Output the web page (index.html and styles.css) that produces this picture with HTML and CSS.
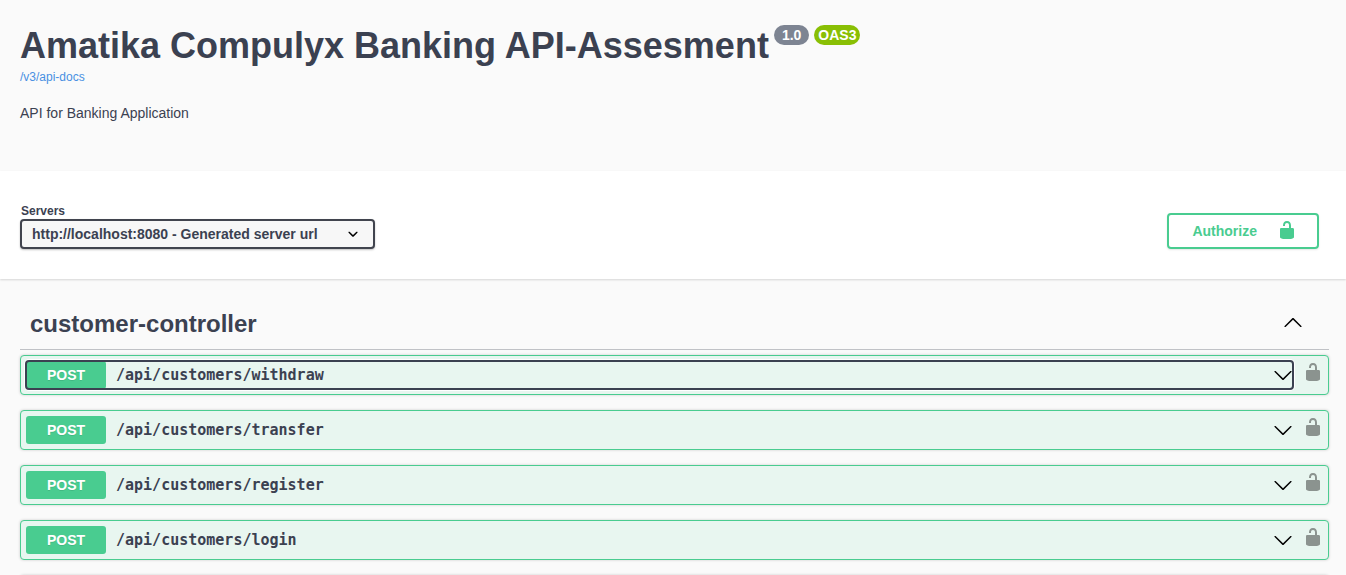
FILE: index.html
```html
<!DOCTYPE html>
<html lang="en">
<head>
<meta charset="utf-8">
<meta name="viewport" content="width=device-width, initial-scale=1">
<title>Amatika Compulyx Banking API-Assesment</title>
<link rel="stylesheet" href="styles.css">
</head>
<body>
<svg class="symbols" aria-hidden="true">
  <symbol id="unlocked" viewBox="0 0 20 20"><path d="M15.8 8H14V5.6C14 2.703 12.665 1 10 1 7.334 1 6 2.703 6 5.6V6h2v-.801C8 3.754 8.797 3 10 3c1.203 0 2 .754 2 2.199V8H4c-.553 0-1 .646-1 1.199V17c0 .549.428 1.139.951 1.307l1.197.387C5.672 18.861 6.55 19 7.1 19h5.8c.549 0 1.428-.139 1.951-.307l1.196-.387c.524-.167.953-.757.953-1.306V9.199C17 8.646 16.352 8 15.8 8z"/></symbol>
  <symbol id="arrow-down" viewBox="0 0 20 20"><path d="M17.418 6.109c.272-.268.709-.268.979 0s.271.701 0 .969l-7.908 7.83c-.27.268-.707.268-.979 0l-7.908-7.83c-.27-.268-.27-.701 0-.969.271-.268.709-.268.979 0L10 13.25l7.418-7.141z"/></symbol>
  <symbol id="arrow-up" viewBox="0 2 20 20"><path d="M17.418 14.908c.272.268.709.268.979 0s.271-.701 0-.969l-7.908-7.83c-.27-.268-.707-.268-.979 0l-7.908 7.83c-.27.268-.27.701 0 .969.271.268.709.268.979 0L10 7.767l7.418 7.141z"/></symbol>
</svg>

<header class="info">
  <h1 class="title">Amatika Compulyx Banking API-Assesment
    <span class="badges"><span class="badge badge-version">1.0</span><span class="badge badge-oas">OAS3</span></span>
  </h1>
  <a class="docs-link" href="/v3/api-docs">/v3/api-docs</a>
  <p class="description">API for Banking Application</p>
</header>

<section class="schemes">
  <div class="servers">
    <label class="servers-label" for="servers">Servers</label>
    <div class="select-box">
      <select class="servers-select" id="servers">
        <option>http://localhost:8080 - Generated server url</option>
      </select>
      <svg class="select-arrow" viewBox="0 0 20 20" aria-hidden="true"><path d="M13.418 7.859c.271-.268.709-.268.978 0 .27.268.272.701 0 .969l-3.908 3.83c-.27.268-.707.268-.979 0l-3.908-3.83c-.27-.267-.27-.701 0-.969.271-.268.709-.268.978 0L10 11l3.418-3.141z"/></svg>
    </div>
  </div>
  <button class="authorize" type="button">Authorize <svg class="icon" aria-hidden="true"><use href="#unlocked"/></svg></button>
</section>

<main class="operations">
  <div class="tag">
    <h2 class="tag-name"><a class="tag-link" href="#customer-controller">customer-controller</a></h2>
    <button class="tag-toggle" type="button" aria-label="Collapse operation"><svg class="icon" aria-hidden="true"><use href="#arrow-up"/></svg></button>
  </div>
  <div class="operation-list" id="customer-controller">
    <div class="operation">
      <button class="summary summary-focused" type="button"><span class="method">POST</span><span class="path">/api/customers/withdraw</span><svg class="icon" aria-hidden="true"><use href="#arrow-down"/></svg></button>
      <button class="lock" type="button" aria-label="Authorization button unlocked"><svg class="icon" aria-hidden="true"><use href="#unlocked"/></svg></button>
    </div>
    <div class="operation">
      <button class="summary" type="button"><span class="method">POST</span><span class="path">/api/customers/transfer</span><svg class="icon" aria-hidden="true"><use href="#arrow-down"/></svg></button>
      <button class="lock" type="button" aria-label="Authorization button unlocked"><svg class="icon" aria-hidden="true"><use href="#unlocked"/></svg></button>
    </div>
    <div class="operation">
      <button class="summary" type="button"><span class="method">POST</span><span class="path">/api/customers/register</span><svg class="icon" aria-hidden="true"><use href="#arrow-down"/></svg></button>
      <button class="lock" type="button" aria-label="Authorization button unlocked"><svg class="icon" aria-hidden="true"><use href="#unlocked"/></svg></button>
    </div>
    <div class="operation">
      <button class="summary" type="button"><span class="method">POST</span><span class="path">/api/customers/login</span><svg class="icon" aria-hidden="true"><use href="#arrow-down"/></svg></button>
      <button class="lock" type="button" aria-label="Authorization button unlocked"><svg class="icon" aria-hidden="true"><use href="#unlocked"/></svg></button>
    </div>
    <div class="operation"></div>
  </div>
</main>
</body>
</html>
```
FILE: styles.css
```css
* {
  box-sizing: border-box;
}

html {
  scrollbar-width: none;
}

body {
  margin: 0;
  background: #fafafa;
  color: #3b4151;
  font-family: "Liberation Sans", Arial, sans-serif;
  font-size: 14px;
}

button {
  margin: 0;
  padding: 0;
  border: 0;
  background: none;
  color: inherit;
  font: inherit;
  cursor: pointer;
}

.symbols {
  position: absolute;
  width: 0;
  height: 0;
}

.icon {
  display: block;
  flex: none;
  width: 20px;
  height: 20px;
  fill: currentColor;
}

.info {
  display: flex;
  flex-direction: column;
  align-items: flex-start;
  padding: 24px 17px 49px 20px;
}

.title {
  display: flex;
  align-items: flex-start;
  gap: 5px;
  margin: 0;
  font-size: 36px;
  line-height: 44px;
}

.badges {
  display: flex;
  gap: 5px;
  padding-top: 1px;
}

.badge {
  padding: 0 8px;
  border-radius: 10px;
  background: #7d8492;
  color: #fff;
  font-size: 14px;
  line-height: 20px;
}

.badge-oas {
  padding: 0 4px;
  background: #89bf04;
}

.docs-link {
  color: #4990e2;
  font-size: 12px;
  line-height: 18px;
  text-decoration: none;
}

.description {
  margin: 18px 0 0;
  line-height: 18px;
}

.schemes {
  display: flex;
  justify-content: space-between;
  align-items: flex-end;
  padding: 32px 27px 30px 20px;
  background: #fff;
  box-shadow: 0 1px 2px rgba(0, 0, 0, .15);
}

.servers {
  display: flex;
  flex-direction: column;
}

.servers-label {
  padding-left: 1px;
  font-size: 12px;
  font-weight: 700;
  line-height: 16px;
}

.select-box {
  position: relative;
}

.servers-select {
  display: block;
  width: 355px;
  max-width: 100%;
  height: 30px;
  padding: 0 40px 0 10px;
  border: 2px solid #41444e;
  border-radius: 4px;
  background: #f7f7f7;
  box-shadow: 0 1px 2px rgba(0, 0, 0, .25);
  color: #3b4151;
  font: 700 14px "Liberation Sans", Arial, sans-serif;
  appearance: none;
}

.select-arrow {
  position: absolute;
  top: 5px;
  right: 12px;
  width: 20px;
  height: 20px;
  pointer-events: none;
}

.authorize {
  display: flex;
  align-items: center;
  gap: 20px;
  height: 36px;
  padding: 0 20px 0 23px;
  border: 2px solid #49cc90;
  border-radius: 4px;
  box-shadow: 0 1px 2px rgba(0, 0, 0, .1);
  color: #49cc90;
  font-weight: 700;
}

.authorize .icon {
  margin-bottom: 2px;
}

.operations {
  padding: 20px 17px 0 20px;
}

.tag {
  display: flex;
  align-items: center;
  justify-content: space-between;
  height: 51px;
  padding: 0 26px 0 10px;
  border-bottom: 1px solid rgba(59, 65, 81, .3);
}

.tag-name {
  margin: 0;
  font-size: 24px;
  line-height: 28px;
}

.tag-link {
  color: inherit;
  text-decoration: none;
}

.tag-toggle {
  color: #000;
}

.operation-list {
  display: flex;
  flex-direction: column;
  gap: 15px;
  padding-top: 5px;
}

.operation {
  display: flex;
  gap: 10px;
  min-height: 40px;
  padding: 5px;
  border: 1px solid #49cc90;
  border-radius: 4px;
  background: #e8f6f0;
  box-shadow: 0 0 3px rgba(0, 0, 0, .19);
}

.summary {
  display: flex;
  flex: 1;
  align-items: center;
  border-radius: 3px;
  text-align: left;
}

.summary-focused {
  outline: 2px solid #3b4151;
  outline-offset: -1px;
  box-shadow: 0 0 0 2px #fff;
}

.method {
  width: 80px;
  border-radius: 3px;
  background: #49cc90;
  color: #fff;
  font-weight: 700;
  line-height: 28px;
  text-align: center;
  text-shadow: 0 1px 0 rgba(0, 0, 0, .1);
}

.path {
  flex: 1;
  padding: 0 10px;
  font-family: "DejaVu Sans Mono", monospace;
  font-size: 15px;
  font-weight: 700;
}

.summary .icon {
  color: #000;
}

.lock {
  align-self: flex-start;
  padding-top: 1px;
  color: #8b938f;
}
```
